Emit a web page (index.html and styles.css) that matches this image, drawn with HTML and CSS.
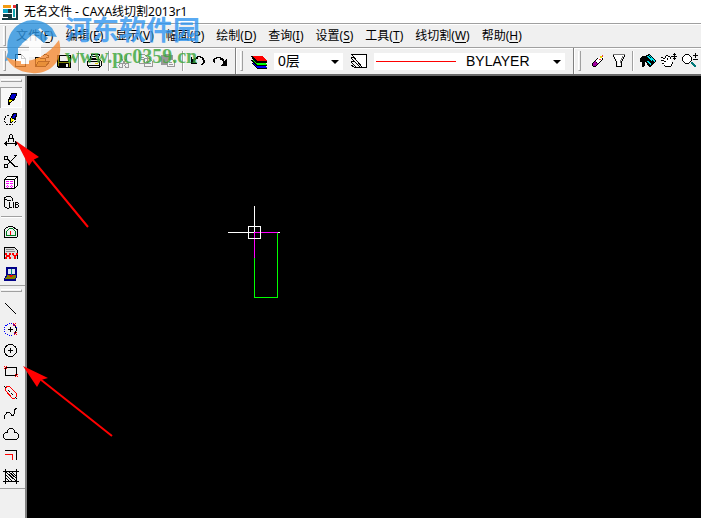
FILE: index.html
```html
<!DOCTYPE html>
<html lang="zh-CN">
<head>
<meta charset="utf-8">
<title>无名文件 - CAXA线切割2013r1</title>
<link rel="stylesheet" href="styles.css">
</head>
<body>
<div class="app">
  <header class="titlebar">
    <svg class="app-icon" viewBox="0 0 16 16" aria-hidden="true"><path fill="#f39a13" d="M1 1h8v3H1z"/><path fill="#153b42" d="M6 5h4v9H6zM14 0h2v16H0v-2h14z"/><path fill="#08a5c4" d="M1 5h5v4H1z"/><path fill="#153b42" d="M1 10h5v3H1z"/><path fill="#e62b32" d="M11 1h3v3h-3z"/><path fill="#14a7b2" d="M11 5h2v8h-2z"/><path fill="#fff" d="M3 9h7v1H3z"/></svg>
    <h1 class="title">无名文件 - CAXA线切割2013r1</h1>
  </header>

  <nav class="menubar">
    <span class="grip"></span>
    <button class="menu">文件(<u>F</u>)</button>
    <button class="menu">编辑(<u>E</u>)</button>
    <button class="menu">显示(<u>V</u>)</button>
    <button class="menu">幅面(<u>P</u>)</button>
    <button class="menu">绘制(<u>D</u>)</button>
    <button class="menu">查询(<u>I</u>)</button>
    <button class="menu">设置(<u>S</u>)</button>
    <button class="menu">工具(<u>T</u>)</button>
    <button class="menu">线切割(<u>W</u>)</button>
    <button class="menu">帮助(<u>H</u>)</button>
  </nav>

  <div class="toolbar">
    <div class="group standard">
      <span class="grip"></span>
      <button class="tool" aria-label="新建"><svg viewBox="0 0 16 16"><path fill="#fff" stroke="#000" d="M3.500 1.500h6l4 4v8h-10zM9.500 1.500v4h4"/></svg></button>
      <button class="tool" aria-label="打开"><svg viewBox="0 0 16 16"><path fill="#ffef7a" stroke="#000" d="M1.500 13.500v-9h4l1 1h5v3"/><path fill="#b8a84a" stroke="#000" d="M1.500 13.500l3-5h11l-4 5z"/><path fill="none" stroke="#000" d="M9 2.500h1M10 1.500h3M13 2.500h1M14.500 2v3M12 4.500h3"/></svg></button>
      <button class="tool" aria-label="保存"><svg viewBox="0 0 16 16"><path d="M1 2h14v13H2l-1-1z"/><path fill="#808000" d="M2 3h1v10H2zM13 5h1v9h-1zM3 9h10v1H3z"/><path fill="#f0f0f0" d="M4 3h8v5H4zM10 11h2v3h-2zM13 3h1v1h-1z"/></svg></button>
      <span class="sep"></span>
      <button class="tool" aria-label="打印"><svg viewBox="0 0 16 16"><path fill="#fff" stroke="#000" d="M5.500 1.500h8l-2 6h-8z"/><path fill="none" stroke="#000" d="M6 3.500h5M5 5.500h5"/><path fill="#f0f0e8" stroke="#000" d="M1.500 8.500l2-2h10l2 2v4l-2 2h-10l-2-2z"/><path d="M2 8h12v1H2zM2 12h11v1H2zM13 8h1v6h-1z"/><path fill="#e0d000" d="M9 10h3v1H9z"/></svg></button>
      <span class="sep"></span>
      <button class="tool" aria-label="剪切" disabled><svg viewBox="0 0 16 16"><path fill="none" stroke="#999" d="M5.500 2v4l4 5M10.500 2v4l-4 5"/><circle cx="5" cy="12.500" r="2" fill="none" stroke="#999"/><circle cx="11" cy="12.500" r="2" fill="none" stroke="#999"/></svg></button>
      <button class="tool" aria-label="复制" disabled><svg viewBox="0 0 16 16"><path fill="#f5f5f5" stroke="#999" d="M1.500 1.500h5l3 3v6h-8zM6.500 5.500h5l3 3v5h-8z"/><path fill="none" stroke="#999" d="M3 4.500h3M3 6.500h3M8 8.500h3M8 10.500h5"/></svg></button>
      <button class="tool" aria-label="粘贴" disabled><svg viewBox="0 0 16 16"><path fill="#999" d="M1 2h3l1-1h4l1 1h3v10H1z"/><path fill="#f5f5f5" stroke="#999" d="M7.500 6.500h5l2 2v5h-7z"/><path stroke="#999" d="M9 9.500h3M9 11.500h4"/></svg></button>
      <span class="sep"></span>
      <button class="tool" aria-label="撤销"><svg viewBox="0 0 16 16"><path d="M1 4h1v2l2 2 3 3H1z"/><path d="M3 6h2v2H3zM4 5h2v2H4zM6 4h2v2H6zM7 3h4v1H7zM10 4h3v1h-3zM12 5h2v2h-2zM13 7h2v3h-2zM12 10h2v1h-2zM11 11h2v1h-2z"/></svg></button>
      <button class="tool" aria-label="重做"><svg viewBox="0 0 16 16"><path d="M15 6v7H8l3-3 2-2 1-2z"/><path d="M11 8h2v2h-2zM10 6h2v2h-2zM8 5h3v2H8zM4 4h5v1H4zM2 5h3v1H2zM1 6h2v3H1zM2 9h1v1H2z"/></svg></button>
    </div>
    <div class="group layers">
      <span class="grip"></span>
      <button class="tool wide" aria-label="层控制"><svg viewBox="0 0 16 16"><path fill="#00f" d="M1 10h10l5 5H6z"/><path d="M1 9h10l5 4H5z"/><path fill="#0f0" d="M1 7h10l5 5H6z"/><path d="M1 5h10l5 4v1H5z"/><path fill="#f00" d="M1 3h10l5 5H6z"/><path d="M0 3h1l5 5h10v1H6L0 4zM0 7h1l5 5h10v1H6L0 8zM1 10l5 5h10v1H6l-5-5z"/></svg></button>
      <label class="combo layer"><select aria-label="当前层"><option>0层</option></select></label>
      <button class="tool wide" aria-label="线型"><svg viewBox="0 0 16 16"><path fill="#fff" stroke="#000" d="M.5 1.500h15v13h-4z"/><path fill="none" stroke="#000" d="M0 4.500h3M0 5l9 9h6M0 8.500h4M0 9l5 5h5M0 12l3 2h4"/></svg></button>
      <label class="combo linetype"><select aria-label="当前线型"><option>BYLAYER</option></select><span class="sample"></span></label>
    </div>
    <div class="group view">
      <span class="grip"></span>
      <button class="tool" aria-label="删除"><svg viewBox="0 0 16 16"><path fill="#fff" d="M5 8l7-6 2 3-6 7z"/><path fill="#a000a0" d="M5 8l3 3-2 3H3v-4z"/><path d="M2 10h1v3H2zM3 9h1v1H3zM4 8h1v1H4zM5 7h1v1H5zM6 6h1v1H6zM7 5h1v1H7zM3 13h3v1H3zM6 12h1v1H6zM7 11h1v1H7zM8 10h1v1H8zM9 9h1v1H9zM10 8h1v1h-1zM11 7h1v1h-1zM12 5h1v2h-1zM6 9h1v1H6z"/><path fill="#e5d800" d="M10 3h2v2h-2z"/><path fill="#f04040" d="M12 2h1v2h-1zM9 6h2v1H9z"/></svg></button>
      <button class="tool" aria-label="过滤"><svg viewBox="0 0 16 16"><path fill="#fff" d="M3 2h10L9 9v5H7V9z"/><path fill="#777" d="M2 1h12v1H2zM10 5h1v2h-1zM11 3h1v2h-1zM9 7h1v3H9z"/><path d="M2 2h1v2H2zM3 4h1v2H3zM4 6h1v2H4zM5 8h1v6H5zM13 2h1v2h-1zM12 4h1v2h-1zM11 6h1v2h-1zM10 8h1v6h-1zM6 13h4v1H6z"/></svg></button>
      <span class="sep"></span>
      <button class="tool" aria-label="颜色"><svg viewBox="0 0 16 16"><path d="M0 6l2-3h4V2l4-1 6 7-5 6H9L5 8v4l-2 2H2V8l-1 3z"/><path fill="#00e5ee" d="M6 3h2l4 4-1 1zM9 2h1l5 6-1 1zM6 8h2l3 3-1 1z"/></svg></button>
      <button class="tool" aria-label="平移"><svg viewBox="0 0 16 16"><path fill="#fff" d="M1 5h3l1-2h3l2 2v4l2 2-2 3H4l-3-4z"/><path d="M0 4h2v1H0zM2 5h2v1H2zM4 3h1v2H4zM5 2h2v1H5zM7 3h2v1H7zM9 4h1v2H9zM0 7h3v1H0zM3 8h2v1H3zM1 10h2v1H1zM3 12h1v1H3zM4 13h6v1H4zM10 11h1v2h-1zM11 9h1v2h-1zM6 5h1v2H6zM13 0h1v7h-1zM10 3h6v1h-6zM12 1h3v1h-3zM12 5h3v1h-3z"/></svg></button>
      <button class="tool" aria-label="缩放"><svg viewBox="0 0 16 16"><path fill="#fff" stroke="#000" d="M3.500 1.500h3l3 3v3l-3 3h-3l-3-3v-3z"/><path fill="#007878" d="M9 9h2v1h1v1h1v1h1v2h-2v-1h-1v-1h-1v-1H9z"/><path d="M13 0h1v5h-1zM11 2h5v1h-5zM11 6h5v1h-5z"/></svg></button>
    </div>
  </div>

  <main class="workspace">
    <aside class="sidebar">
      <div class="palette">
        <span class="hgrip"></span>
        <button class="tool pressed" aria-label="绘制"><svg viewBox="0 0 16 16"><path fill="#00c" stroke="#000" d="M8.500 3.500h5v2l-3 5-4-2z"/><path fill="#ff0" stroke="#000" d="M6.500 8.500l3 2-4 4v-4z"/><path d="M5 12h2v3H5z"/></svg></button>
        <button class="tool" aria-label="曲线编辑"><svg viewBox="0 0 16 16"><path fill="none" stroke="#000" stroke-dasharray="2 1" d="M6 4.500H3.500l-2 3v3l2 3h6l3-3V8"/><path fill="#00c" stroke="#000" d="M10.500 2.500h3v2l-2 4-3-2z"/><path fill="#ff0" d="M8 7l3 2-3 3z"/><path d="M7 7h1v5H7zM8 11h1v1H8zM9 10h1v1H9z"/></svg></button>
        <button class="tool" aria-label="工程标注"><svg viewBox="0 0 16 16"><path d="M7 2h2v1H7zM6 3h1v3H6zM9 3h1v3H9zM5 6h6v1H5zM5 7h1v3H5zM10 7h1v3h-1zM1 11h14v1H1zM2 10h2v3H2zM3 9h1v5H3zM12 10h2v3h-2zM12 9h1v5h-1z"/></svg></button>
        <button class="tool" aria-label="裁剪"><svg viewBox="0 0 16 16"><path fill="none" stroke="#000" d="M1.500 3.500h3v3h-3zM1.500 11.500h3v3h-3zM5 6l7 7M5 7l6 6M13 3l-9 9M11 2.500h3M11 13.500h4"/></svg></button>
        <button class="tool" aria-label="块操作"><svg viewBox="0 0 16 16"><path fill="#fff" stroke="#000" d="M1.500 5.500l3-3h10v9l-3 3h-10zM1.500 5.500h10v9M11.500 5.500l3-3"/><path fill="none" stroke="#f0f" stroke-dasharray="1 1" d="M3 7.500h8M3 9.500h8M3 12.500h8M4.500 7v7M8.500 7v7"/></svg></button>
        <button class="tool" aria-label="图库"><svg viewBox="0 0 16 16"><path d="M3 1h5v1H3zM1 2h2v1H1zM8 2h1v1H8zM1 3h1v9H1zM9 3h1v3H9zM2 4h2v1H2zM4 5h4v1H4zM2 12h2v1H2zM4 13h2v1H4zM6 7h1v6H6zM6 12h3v1H6zM10 7h1v6h-1zM12 7h1v6h-1zM13 7h2v1h-2zM13 9h2v1h-2zM13 12h2v1h-2zM15 8h1v1h-1zM15 10h1v2h-1z"/></svg></button>
        <span class="hsep"></span>
        <button class="tool" aria-label="轨迹生成"><svg viewBox="0 0 16 16"><path fill="none" stroke="#000" d="M1.500 5.500l2-2h1l1-1h4l4 3h1v7l-1 1h-12z"/><path fill="none" stroke="#008020" d="M3.500 11.500v-4l3-3h3l3 3v4z"/><path stroke="red" d="M7.500 7v4"/></svg></button>
        <button class="tool" aria-label="代码生成"><svg viewBox="0 0 16 16"><path fill="#ddd" stroke="#000" d="M1.500 14V2.500h10l3 3V14"/><path stroke="#888" d="M3 4.500h8M3 6.500h9"/><path fill="red" d="M2 8h2v2H2zM6 8h2v2H6zM3 10h4v2H3zM2 12h2v2H2zM6 12h2v2H6zM9 8h2v2H9zM13 8h2v2h-2zM10 10h4v1h-4zM11 11h2v3h-2z"/></svg></button>
        <button class="tool" aria-label="传输"><svg viewBox="0 0 16 16"><path fill="#d8e6ee" stroke="#000088" stroke-width="2" d="M4 2h9v9H4z"/><path fill="#808000" stroke="#000088" d="M1.500 12.500l3-4h9v3l-3 3h-9z"/><path fill="#000088" d="M1 13h12v2H1z"/><path fill="red" d="M6 9h4v1H9v1H7v-1H6z"/><path fill="#088" d="M8 3h1v6H8z"/></svg></button>
      </div>
      <div class="palette draw">
        <span class="hgrip"></span>
        <button class="tool" aria-label="直线"><svg viewBox="0 0 16 16"><path stroke="#000" d="M2 3l11 11"/></svg></button>
        <button class="tool" aria-label="圆弧"><svg viewBox="0 0 16 16"><circle cx="7.500" cy="8.500" r="6" fill="none" stroke="#00f" stroke-dasharray="1 1"/><path fill="none" stroke="#000" d="M12 4l1.500 4L12 13M5 8.500h5M7.500 6v5"/><path stroke="red" d="M10 2l3 3m0-3l-3 3M11 11l3 3m0-3l-3 3"/></svg></button>
        <button class="tool" aria-label="圆"><svg viewBox="0 0 16 16"><circle cx="7.500" cy="8.500" r="6" fill="none" stroke="#000"/><path stroke="#000" d="M5 8.500h5M7.500 6v5"/></svg></button>
        <button class="tool" aria-label="矩形"><svg viewBox="0 0 16 16"><path fill="none" stroke="#000" d="M2.500 4.500h11v8h-11z"/><path stroke="red" d="M1 3l3 3m0-3L1 6M12 11l3 3m0-3l-3 3"/></svg></button>
        <button class="tool" aria-label="中心线"><svg viewBox="0 0 16 16"><path fill="none" stroke="red" d="M2.500 6.500v-3l2-1h2l7 7v3l-2 2h-2z"/><path stroke="#000" stroke-dasharray="3 2" d="M1 2l13 13"/></svg></button>
        <button class="tool" aria-label="样条"><svg viewBox="0 0 16 16"><path fill="none" stroke="#000" d="M1.500 14v-3l3-4h2l2 3h2l1-2V5l2-2"/></svg></button>
        <button class="tool" aria-label="轮廓线"><svg viewBox="0 0 16 16"><path fill="none" stroke="#000" d="M2.500 13.500l-2-2v-3l2-2h2v-2l2-2h3l2 2v2h2l2 2v3l-2 2z"/></svg></button>
        <button class="tool" aria-label="等距线"><svg viewBox="0 0 16 16"><path fill="none" stroke="#000" d="M2 3.500h11.500V13"/><path fill="none" stroke="red" d="M2 7.500h7.500V13"/></svg></button>
        <button class="tool" aria-label="剖面线"><svg viewBox="0 0 16 16"><path fill="none" stroke="#000" d="M0 3.500h16M0 13.500h16M2.500 1v15M13.500 1v15"/><path stroke="#000" d="M3 4l10 9M6 4l7 6M9 4l4 4M3 7l7 7M3 10l4 4"/></svg></button>
      </div>
    </aside>
    <section class="canvas" aria-label="绘图区">
      <svg class="drawing" viewBox="0 0 260 240" aria-hidden="true">
        <path stroke="#0f0" d="M227.500 182v39h23V156.500"/>
        <path stroke="#f0f" d="M227.500 182v-25.500h23"/>
        <path stroke="#fff" d="M227.500 130v26M201 156.500h26M251 156.500h2M221.500 150.500h12v12h-12z"/>
      </svg>
    </section>
  </main>

  <svg class="pointers" viewBox="0 0 120 440" aria-hidden="true">
    <path d="M32 159l56 68M40 379l72 57"/>
    <path class="head" d="M16 141l23 16-6 3-4 6zM23 366l25 12-7 2-4 7z"/>
  </svg>

  <div class="watermark">
    <svg class="logo" viewBox="0 0 58 60" aria-hidden="true">
      <path fill="#2d93df" d="M3 36A26 26 0 0 1 47 12l5 9-9-1-8-8-22 20v11H9l-9 2z"/>
      <path fill="#f58b35" d="M54 24C60 46 43 59 27 57 12 56 5 49 1 41c16 9 38 4 53-17z"/>
      <path fill="#fff" d="M15 28l13-13 13 12-5 2v12H24V30z"/>
      <path fill="#2d93df" d="M9 29l20-19 14 12-4 5-11-9-17 15z"/>
      <path fill="#fff" d="M16 35h8v13h-8z"/>
    </svg>
    <div class="brand"><span class="name">河东软件园</span><span class="site">www.pc0359.cn</span></div>
  </div>
</div>
</body>
</html>
```
FILE: styles.css
```css
* { box-sizing: border-box; }

body {
  margin: 0;
  background: #f0f0f0;
  color: #000;
  font: 12px/16px "Noto Sans", "Noto Sans CJK SC", sans-serif;
}

button, select { font: inherit; color: inherit; }

button {
  padding: 0;
  border: 0;
  background: none;
}

.app {
  position: relative;
  display: flex;
  flex-direction: column;
  min-height: 100vh;
  overflow: hidden;
}

.titlebar {
  display: flex;
  align-items: center;
  gap: 6px;
  height: 23px;
  padding: 0 2px;
  background: #fff;
}

.app-icon { width: 16px; height: 16px; }

.title {
  margin: 0;
  font-size: 12px;
  font-weight: 400;
  white-space: nowrap;
}

.menubar, .toolbar {
  display: flex;
  flex: none;
  border-top: 1px solid #a0a0a0;
  box-shadow: inset 0 1px #fff;
}

.menubar {
  align-items: center;
  height: 24px;
  padding-left: 3px;
}

.menubar .grip { margin-right: 4px; }

.menu {
  padding: 0 6px;
  white-space: nowrap;
}

.menu u { text-underline-offset: 2px; }

.toolbar {
  height: 29px;
  border-bottom: 2px solid #696969;
}

.group {
  display: flex;
  align-items: center;
  padding-left: 4px;
}

.group + .group {
  border-left: 1px solid #808080;
  box-shadow: inset 1px 0 #fff;
}

.grip {
  flex: none;
  width: 3px;
  height: 20px;
  border: solid #a0a0a0;
  border-width: 0 1px 1px 0;
  border-left: 1px solid #fff;
}

.standard { padding-left: 3px; padding-right: 4px; }
.standard .grip { margin-right: 3px; }
.layers { padding-right: 8px; }
.view .grip { margin-right: 6px; }

.tool {
  display: grid;
  flex: none;
  place-items: center;
  width: 22px;
  height: 21px;
}

.view .tool { width: 21px; }
.tool.wide { width: 31px; }

.tool svg {
  width: 16px;
  height: 16px;
  overflow: visible;
  shape-rendering: crispEdges;
}

.sep {
  flex: none;
  width: 2px;
  height: 20px;
  margin: 0 3px;
  border-left: 1px solid #a0a0a0;
  border-right: 1px solid #fff;
}

.combo {
  position: relative;
  height: 17px;
  background: #fff;
}

.combo select {
  width: 100%;
  height: 17px;
  padding: 0 4px;
  border: 0;
  appearance: none;
  background: transparent;
  font: 14px/17px "Liberation Sans", "Noto Sans CJK SC", sans-serif;
}

.combo::after {
  content: "";
  position: absolute;
  top: 7px;
  right: 4px;
  border: 4px solid transparent;
  border-top: 4px solid #000;
  border-bottom: 0;
}

.layer { width: 69px; }
.linetype { width: 191px; }
.linetype select { padding-left: 92px; }

.sample {
  position: absolute;
  top: 8px;
  left: 2px;
  width: 80px;
  height: 1px;
  background: #f00;
}

.workspace {
  display: flex;
  flex: 1;
}

.sidebar {
  flex: none;
  width: 27px;
  border-right: 2px solid #808080;
}

.palette {
  display: flex;
  flex-direction: column;
  align-items: flex-start;
  padding-top: 3px;
  padding-bottom: 1px;
  border-bottom: 1px solid #a0a0a0;
}

.draw { padding-bottom: 2px; }

.hgrip {
  width: 21px;
  height: 3px;
  margin: 0 0 5px 1px;
  border: solid #a0a0a0;
  border-width: 0 1px 1px 0;
  border-top: 1px solid #fff;
}

.pressed {
  background: #f8f8f8;
  box-shadow: inset 1px 1px #a0a0a0, inset -1px -1px #fff;
}

.hsep {
  width: 21px;
  height: 2px;
  margin: 3px 0 3px 1px;
  border-top: 1px solid #a0a0a0;
  border-bottom: 1px solid #fff;
}

.canvas {
  position: relative;
  flex: 1;
  overflow: hidden;
  background: #000;
}

.drawing {
  position: absolute;
  top: 0;
  left: 0;
  width: 260px;
  height: 240px;
  fill: none;
  shape-rendering: crispEdges;
}

.pointers {
  position: absolute;
  top: 0;
  left: 0;
  width: 120px;
  height: 440px;
  fill: none;
  stroke: #f00;
  stroke-width: 2;
  pointer-events: none;
}

.pointers .head { fill: #f00; stroke: none; }

.watermark {
  position: absolute;
  top: 16px;
  left: 5px;
  display: flex;
  gap: 2px;
  opacity: 0.8;
  pointer-events: none;
}

.logo { width: 58px; height: 60px; }

.brand {
  display: flex;
  flex-direction: column;
}

.name {
  color: #3096f0;
  font: 700 27px/26px "Noto Sans CJK SC", sans-serif;
}

.site {
  color: #3aa63a;
  font: 700 20px/28px "Liberation Serif", serif;
}
```
